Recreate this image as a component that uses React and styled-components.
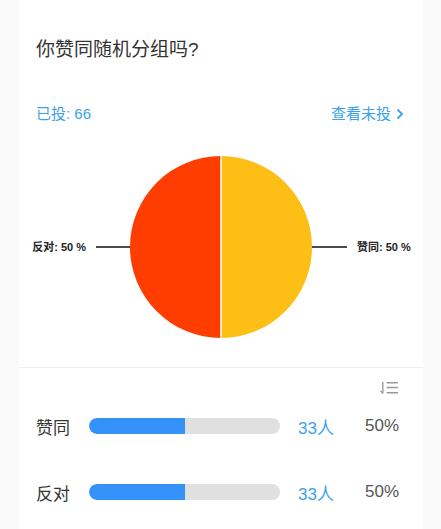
import React from "react";
import styled, { createGlobalStyle } from "styled-components";

const GlobalStyle = createGlobalStyle`
  html, body {
    margin: 0;
    padding: 0;
    background: #fafafa;
  }
  body {
    font-family: "Liberation Sans", "Noto Sans CJK SC", sans-serif;
  }
`;

const votes = [
  { label: "赞同", count: 33, pct: 50 },
  { label: "反对", count: 33, pct: 50 },
];

const App = () => {
  return (
    <Page>
      <GlobalStyle />
      <Card>
        <Summary>
          <Title>你赞同随机分组吗?</Title>
          <MetaRow>
            <Voted>已投: 66</Voted>
            <Unvoted href="#">
              查看未投
              <Chevron viewBox="0 0 8 12">
                <path d="M1.5 1.5 L6 6 L1.5 10.5" />
              </Chevron>
            </Unvoted>
          </MetaRow>
          <Chart viewBox="0 0 404 242">
            <path d="M202 122 L202 31 A91 91 0 0 0 202 213 Z" fill="#ff3d00" />
            <path d="M202 122 L202 31 A91 91 0 0 1 202 213 Z" fill="#fdbf16" />
            <line x1="202" y1="31" x2="202" y2="213" stroke="#fff" strokeWidth="1.5" />
            <line x1="77" y1="122" x2="111" y2="122" stroke="#111" strokeWidth="1.6" />
            <line x1="293" y1="122" x2="328" y2="122" stroke="#111" strokeWidth="1.6" />
            <ChartLabel x="67" y="126" textAnchor="end">反对: 50 %</ChartLabel>
            <ChartLabel x="338" y="126">赞同: 50 %</ChartLabel>
          </Chart>
        </Summary>
        <Results>
          <SortRow>
            <SortIcon viewBox="0 0 20 14">
              <path d="M3 0.5 V12.5" />
              <path d="M0.8 10 L3 12.8" />
              <path d="M7 1.5 H19 M7 6.5 H19 M7 12 H19" />
            </SortIcon>
          </SortRow>
          {votes.map((v) => (
            <VoteRow key={v.label}>
              <VoteLabel>{v.label}</VoteLabel>
              <Track>
                <Fill style={{ width: `${v.pct}%` }} />
              </Track>
              <Count>{v.count}人</Count>
              <Percent>{v.pct}%</Percent>
            </VoteRow>
          ))}
        </Results>
      </Card>
    </Page>
  );
};

export default App;

const Page = styled.div`
  min-height: 529px;
  padding: 0 18px 0 19px;
  box-sizing: border-box;
`;
const Card = styled.div`
  background: #fff;
  min-height: 529px;
  display: flex;
  flex-direction: column;
`;
const Summary = styled.section`
  padding-top: 36px;
  display: flex;
  flex-direction: column;
  border-bottom: 1px solid #eeeeee;
`;
const Title = styled.h1`
  margin: 0 0 0 17px;
  font-size: 19px;
  line-height: 28px;
  font-weight: 400;
  color: #333;
`;
const MetaRow = styled.div`
  margin-top: 39px;
  padding: 0 19px 0 17px;
  display: flex;
  justify-content: space-between;
  align-items: center;
  line-height: 22px;
  font-size: 15px;
`;
const Voted = styled.span`
  color: #3aa2ec;
`;
const Unvoted = styled.a`
  color: #3aa2ec;
  text-decoration: none;
  display: flex;
  align-items: center;
  gap: 5px;
`;
const Chevron = styled.svg`
  width: 8px;
  height: 12px;
  fill: none;
  stroke: #3aa2ec;
  stroke-width: 1.8;
`;
const Chart = styled.svg`
  display: block;
  width: 404px;
  height: 242px;
`;
const ChartLabel = styled.text`
  font-family: "Liberation Sans", "Noto Sans CJK SC", sans-serif;
  font-size: 11px;
  font-weight: 700;
  fill: #222;
`;
const Results = styled.section`
  padding: 11px 24px 0 17px;
  display: flex;
  flex-direction: column;
`;
const SortRow = styled.div`
  display: flex;
  justify-content: flex-end;
  height: 18px;
  align-items: center;
`;
const SortIcon = styled.svg`
  width: 19px;
  height: 14px;
  fill: none;
  stroke: #999;
  stroke-width: 1.4;
`;
const VoteRow = styled.div`
  display: flex;
  align-items: center;
  height: 40px;
  margin-top: 9px;
  & + & {
    margin-top: 26px;
  }
`;
const VoteLabel = styled.span`
  width: 53px;
  font-size: 17px;
  color: #333;
`;
const Track = styled.div`
  width: 191px;
  height: 16px;
  border-radius: 8px;
  background: #e0e0e0;
  overflow: hidden;
`;
const Fill = styled.div`
  height: 100%;
  background: #3592fb;
  border-radius: 8px 0 0 8px;
`;
const Count = styled.span`
  margin-left: 18px;
  flex: 1;
  font-size: 17px;
  color: #3aa2ec;
`;
const Percent = styled.span`
  font-size: 17px;
  color: #555;
`;
